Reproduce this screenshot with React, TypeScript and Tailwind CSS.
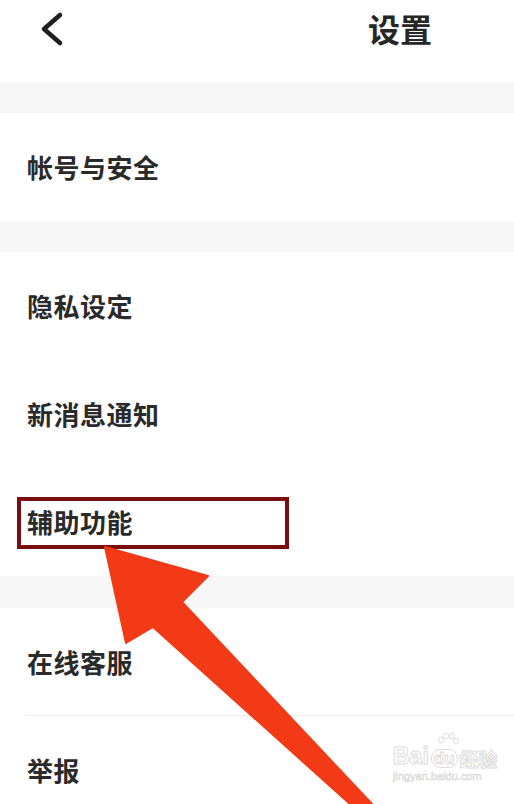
import React from "react";

const font = { fontFamily: '"Noto Sans CJK SC", "Noto Sans", sans-serif' };

function Gap({ h }: { h: string }) {
  return <div className={`${h} w-full bg-[#f7f7f7]`} />;
}

function Row({ label, children, divider }: { label: string; children?: React.ReactNode; divider?: boolean }) {
  return (
    <div className="relative flex h-[108px] items-center pl-[27px]">
      <span className="text-[26px] font-bold leading-none tracking-[0.5px] text-[#2a2a2a]">{label}</span>
      {children}
      {divider && <div className="absolute bottom-0 left-[25px] right-0 h-px bg-[#f1f1f1]" />}
    </div>
  );
}

export default function App() {
  return (
    <div className="relative h-[804px] w-[514px] overflow-hidden bg-white" style={font}>
      {/* header */}
      <div className="flex h-[82px] items-start pt-[8px]">
        <svg width="40" height="40" viewBox="0 0 40 40" className="ml-[32px] mt-[1px]">
          <polyline points="28,6 12,20 28,34" fill="none" stroke="#1f1f1f" strokeWidth="4.5" strokeLinecap="round" strokeLinejoin="round" />
        </svg>
        <div className="ml-auto mr-[82px] text-[32px] font-bold leading-[40px] text-[#262626]">设置</div>
      </div>

      <Gap h="h-[31px]" />
      <Row label="帐号与安全" />
      <Gap h="h-[31px]" />
      <Row label="隐私设定" />
      <Row label="新消息通知" />
      <Row label="辅助功能">
        <div className="absolute left-[17px] top-[29px] h-[52px] w-[272px] border-[4px] border-[#7b0d10]" />
      </Row>
      <Gap h="h-[32px]" />
      <Row label="在线客服" divider />
      <Row label="举报" />

      {/* red arrow annotation */}
      <svg className="pointer-events-none absolute left-0 top-0" width="514" height="804" viewBox="0 0 514 804">
        <polygon
          points="105,547 208,576 182,602 372,804 350,804 153,627 126,643"
          fill="#f23a17"
          stroke="#f23a17"
          strokeWidth="2"
          strokeLinejoin="round"
        />
      </svg>

      {/* watermark */}
      <div className="pointer-events-none absolute left-[393px] top-[745px] flex flex-col items-start">
        <div className="relative flex items-end text-[23px] font-bold leading-none text-white [-webkit-text-stroke:1px_#dcdcdc]" style={{ fontFamily: '"Liberation Sans", sans-serif' }}>
          <span>Bai</span>
          <span className="ml-[2px] rounded-[9px] border border-[#dcdcdc] px-[2px] text-[17px]">du</span>
          <span className="ml-[2px] text-[19px]" style={font}>经验</span>
          <svg width="22" height="16" viewBox="0 0 22 16" className="absolute left-[44px] top-[-13px]">
            <g fill="none" stroke="#dcdcdc" strokeWidth="1">
              <ellipse cx="4" cy="8" rx="2.5" ry="3" />
              <ellipse cx="9" cy="4" rx="2.5" ry="3" />
              <ellipse cx="15" cy="4" rx="2.5" ry="3" />
              <ellipse cx="19" cy="9" rx="2.5" ry="3" />
            </g>
          </svg>
        </div>
        <div className="mt-[3px] text-[11px] leading-none text-white [-webkit-text-stroke:0.6px_#d6d6d6]" style={{ fontFamily: '"Liberation Sans", sans-serif' }}>
          jingyan.baidu.com
        </div>
      </div>
    </div>
  );
}
